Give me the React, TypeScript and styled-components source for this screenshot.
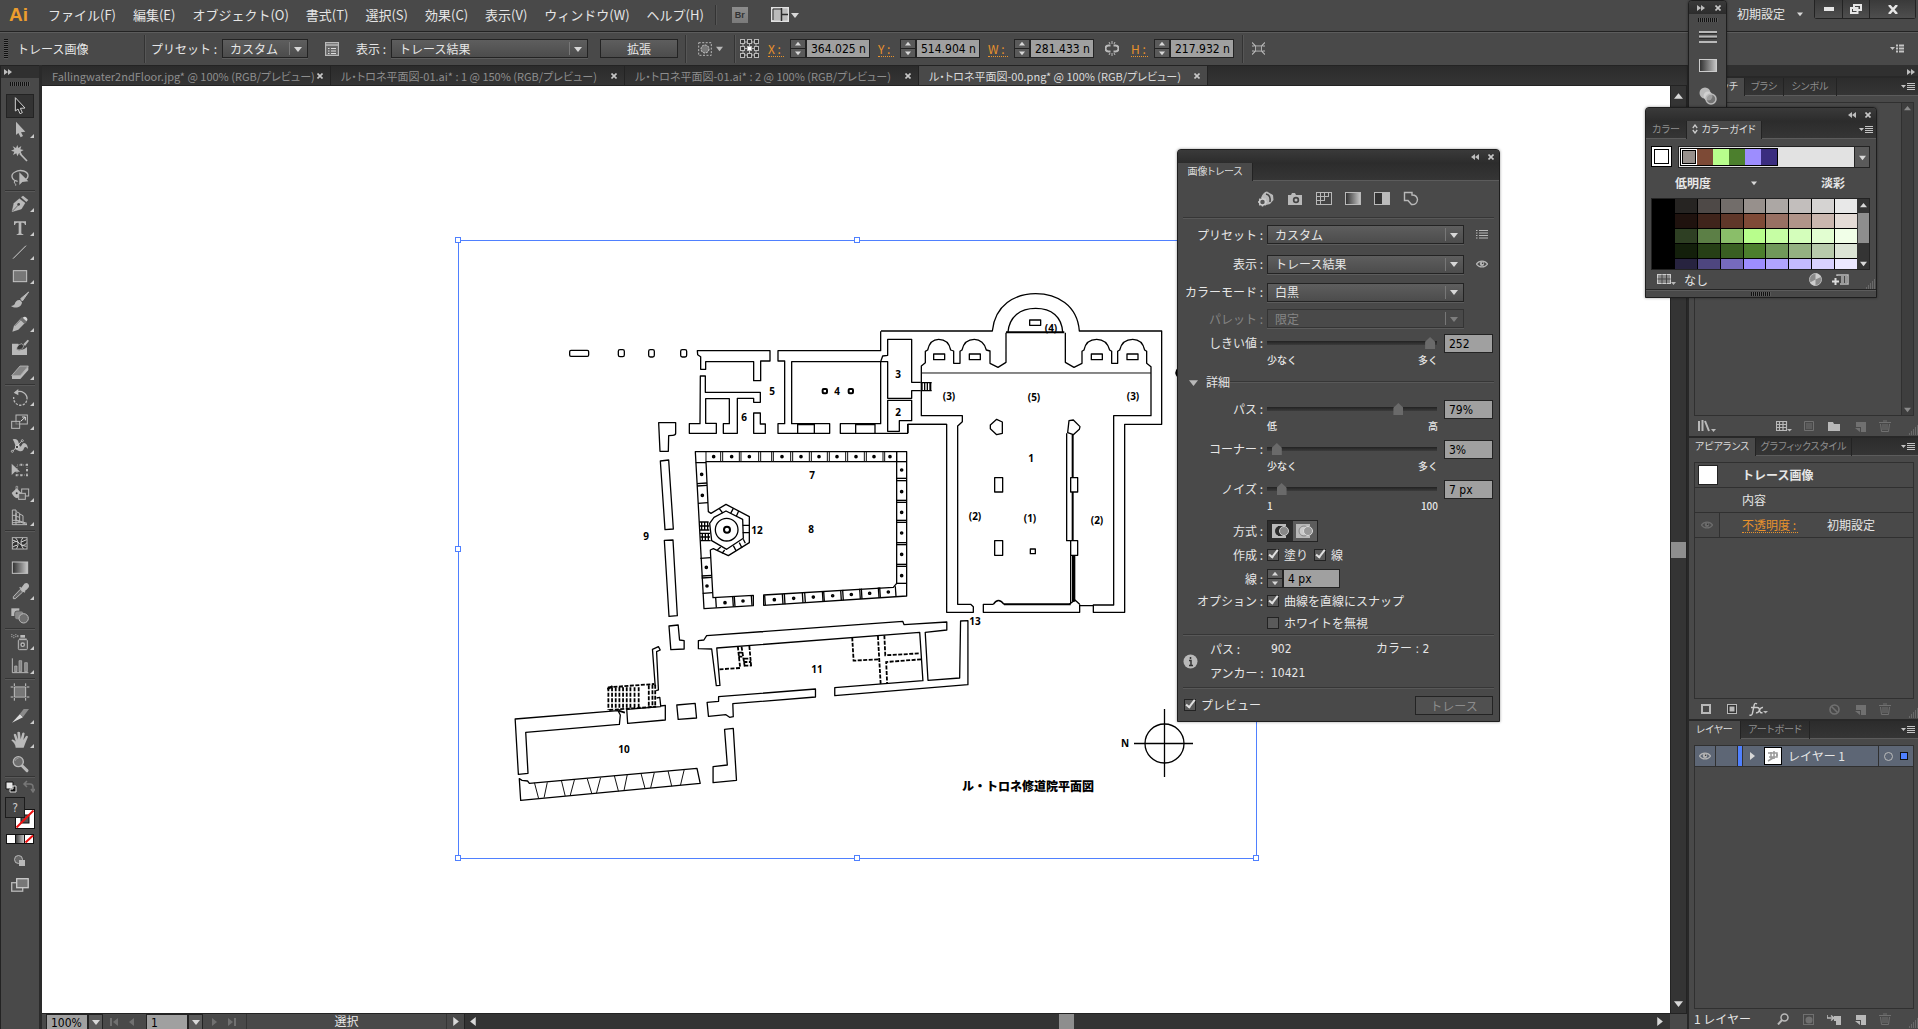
import React from "react";
import styled, { createGlobalStyle, css } from "styled-components";

const ui = '"Noto Sans CJK JP", "Noto Sans", sans-serif';
const num = '"DejaVu Sans Condensed", "Noto Sans", "Noto Sans CJK JP", sans-serif';
const c = {
  panel: "#494949",
  dark: "#303030",
  line: "#232323",
  light: "#5c5c5c",
  text: "#e6e6e6",
  dim: "#8e8e8e",
  field: "#a0a0a0",
  orange: "#e8922c",
  blue: "#4f80ff",
};

const Global = createGlobalStyle`
  *, *::before, *::after { box-sizing: border-box; }
  body { margin: 0; background: ${c.panel}; color: ${c.text}; font: 12px/16px ${ui}; overflow: hidden; }
  button, input, select { font: inherit; color: inherit; margin: 0; padding: 0; border: 0; background: none; border-radius: 0; }
  svg { display: block; flex: none; }
`;

/* ---------- shared parts ---------- */

const Shell = styled.div`
  position: relative;
  display: flex;
  flex-direction: column;
  height: 100vh;
  overflow: hidden;
  background: ${c.panel};
`;

const IconButton = styled.button<{ $w?: number; $dim?: boolean }>`
  display: inline-flex;
  align-items: center;
  justify-content: center;
  flex: none;
  width: ${(p) => (p.$w ? `${p.$w}px` : "auto")};
  opacity: ${(p) => (p.$dim ? 0.35 : 1)};
`;

const Tri = ({ d = "down", s = 8, color = "#d8d8d8" }: { d?: string; s?: number; color?: string }) => {
  const pts: Record<string, string> = {
    down: "0,2 8,2 4,7",
    up: "0,6 8,6 4,1",
    left: "6,0 6,8 1,4",
    right: "2,0 2,8 7,4",
  };
  return (
    <svg width={s} height={s} viewBox="0 0 8 8" aria-hidden>
      <polygon points={pts[d]} fill={color} />
    </svg>
  );
};

const Cross = ({ s = 6, color = "#c8c8c8" }: { s?: number; color?: string }) => (
  <svg width={s} height={s} viewBox="0 0 6 6" aria-hidden>
    <path d="M.5 .5L5.5 5.5M5.500 .5L.5 5.500" stroke={color} strokeWidth="1.6" />
  </svg>
);

const Chevrons = ({ left = false }: { left?: boolean }) => (
  <svg width="8" height="6" viewBox="0 0 8 6" aria-hidden>
    <path d={left ? "M4 0V6L0 3ZM8 0V6L4 3Z" : "M0 0V6L4 3ZM4 0V6L8 3Z"} fill="#bdbdbd" />
  </svg>
);

const FlyoutIcon = () => (
  <svg width="14" height="9" viewBox="0 0 14 9" aria-hidden>
    <path d="M0 3H5L2.500 6Z" fill="#c4c4c4" />
    <path d="M6 1.500H14M6 3.500H14M6 5.500H14M6 7.500H14" stroke="#c4c4c4" />
  </svg>
);

const ListFlyout = () => (
  <svg width="14" height="10" viewBox="0 0 14 10" aria-hidden>
    <path d="M0 3H5L2.500 6Z" fill="#c4c4c4" />
    <path d="M6 1.500H8M6 4.500H8M6 7.500H8M9 1.500H14M9 4.500H14M9 7.500H14" stroke="#c4c4c4" strokeWidth="2" />
  </svg>
);

const Dots = styled.i`
  display: block;
  width: 20px;
  height: 4px;
  background: repeating-linear-gradient(90deg, #111 0 1px, #5a5a5a 1px 2px);
`;

const GripHold = styled.span`
  align-self: flex-end;
  margin-left: 6px;
`;
const Grip = () => (
  <GripHold>
    <svg width="10" height="10" viewBox="0 0 10 10" aria-hidden>
      <path
        d="M9 1h1M7 3h1M9 3h1M5 5h1M7 5h1M9 5h1M3 7h1M5 7h1M7 7h1M9 7h1M1 9h1M3 9h1M5 9h1M7 9h1M9 9h1"
        stroke="#8a8a8a"
      />
    </svg>
  </GripHold>
);

const Eye = ({ color = "#b4b4b4" }: { color?: string }) => (
  <svg width="12" height="8" viewBox="0 0 12 8" aria-hidden>
    <path d="M.5 4C3 .2 9 .2 11.500 4C9 7.800 3 7.800 .5 4Z" fill="none" stroke={color} strokeWidth="1.3" />
    <circle cx="6" cy="3.700" r="2.200" fill={color} />
    <circle cx="6.600" cy="3.200" r=".8" fill="#333" />
  </svg>
);

/* ---------- menu bar ---------- */

const MenuBar = styled.header`
  display: flex;
  align-items: center;
  flex: none;
  height: 32px;
  padding: 0 2px 2px 9px;
  border-bottom: 1px solid ${c.line};
`;
const Logo = styled.span`
  width: 39px;
  color: #eb9d2e;
  font: bold 19px/28px "Liberation Sans", sans-serif;
`;
const Menus = styled.nav`
  display: flex;
  gap: 17px;
  margin-right: 11px;
  white-space: nowrap;
`;
const MenuButton = styled.button`
  font-size: 13px;
  line-height: 28px;
`;
const Rule = styled.i<{ $h?: number }>`
  flex: none;
  width: 2px;
  height: ${(p) => p.$h ?? 28}px;
  border-left: 1px solid #333;
  border-right: 1px solid #565656;
`;
const BridgeTile = styled.button`
  width: 16px;
  height: 16px;
  margin: 0 23px 0 15px;
  background: linear-gradient(#8d8d8d, #7a7a7a);
  color: #333;
  font: bold 9px/16px "Liberation Sans", sans-serif;
`;
const LayoutButton = styled(IconButton)`
  gap: 2px;
`;
const WorkspaceButton = styled.button`
  display: flex;
  align-items: center;
  gap: 12px;
  height: 26px;
  margin: 0 11px 2px auto;
`;
const WindowButtons = styled.div`
  display: flex;
  align-self: flex-start;
  height: 19px;
  border: 1px solid ${c.line};
  border-top: 0;
  border-radius: 0 0 3px 3px;
`;
const WindowButton = styled.button<{ $w: number }>`
  display: flex;
  align-items: center;
  justify-content: center;
  width: ${(p) => p.$w}px;
  height: 18px;
  background: linear-gradient(#3a3a3a, #4e4e4e);
  & + & {
    border-left: 1px solid ${c.line};
  }
`;

/* ---------- control bar ---------- */

const ControlBar = styled.div`
  display: flex;
  align-items: center;
  flex: none;
  height: 33px;
  padding: 0 11px 1px 4px;
  border-top: 1px solid ${c.light};
  white-space: nowrap;
`;
const SideGrip = styled.i`
  width: 4px;
  height: 20px;
  margin-right: 9px;
  background: repeating-linear-gradient(#111 0 1px, #5a5a5a 1px 2px);
`;
const BarTitle = styled.strong<{ $w: number }>`
  width: ${(p) => p.$w}px;
  font-weight: 400;
`;
const BarLabel = styled.label<{ $w: number }>`
  width: ${(p) => p.$w}px;
`;
const SelectBox = styled.span<{ $w?: number; $off?: boolean }>`
  position: relative;
  display: flex;
  flex: none;
  width: ${(p) => (p.$w ? `${p.$w}px` : "100%")};
  height: 19px;
  border: 1px solid ${c.line};
  background: linear-gradient(#5e5e5e, #4c4c4c);
  ${(p) => p.$off && css`background: ${c.panel}; border-color: #343434; color: #858585;`}
  box-shadow: 0 1px 0 ${c.light};
`;
const SelectEl = styled.select`
  appearance: none;
  width: 100%;
  padding: 0 20px 0 7px;
  line-height: 16px;
  outline: none;
  opacity: 1;
`;
const SelectMark = styled.span`
  position: absolute;
  right: 0;
  top: 2px;
  display: flex;
  align-items: center;
  height: 13px;
  padding: 0 5px 0 4px;
  border-left: 1px solid #777;
  pointer-events: none;
`;
const PushButton = styled.button<{ $w: number; $off?: boolean }>`
  width: ${(p) => p.$w}px;
  height: 19px;
  border: 1px solid ${c.line};
  background: ${(p) => (p.$off ? "#505050" : "linear-gradient(#5e5e5e, #4c4c4c)")};
  color: ${(p) => (p.$off ? "#8c8c8c" : c.text)};
  line-height: 15px;
`;
const NumGroup = styled.div`
  display: flex;
  align-items: center;
  margin-right: 8px;
`;
const NumLabel = styled.label<{ $w: number }>`
  width: ${(p) => p.$w}px;
  margin-right: 6px;
  color: ${c.orange};
  border-bottom: 1px dotted ${c.orange};
  line-height: 15px;
`;
const StepperBox = styled.span`
  display: flex;
  flex-direction: column;
  width: 16px;
  height: 19px;
  border: 1px solid ${c.line};
  background: #5a5a5a;
  button {
    display: flex;
    flex: 1;
    align-items: center;
    justify-content: center;
  }
  button + button {
    border-top: 1px solid ${c.line};
  }
`;
const Field = styled.input<{ $w: number }>`
  width: ${(p) => p.$w}px;
  height: 19px;
  padding: 1px 0 0 4px;
  border: 1px solid ${c.line};
  background: ${c.field};
  color: #000;
  font: 12px/17px ${num};
  outline: none;
`;

const Drop = ({ id, value, w, off }: { id: string; value: string; w?: number; off?: boolean }) => (
  <SelectBox $w={w} $off={off}>
    <SelectEl id={id} disabled={off}>
      <option>{value}</option>
    </SelectEl>
    <SelectMark>
      <Tri color={off ? "#7e7e7e" : "#d8d8d8"} />
    </SelectMark>
  </SelectBox>
);

const Stepper = ({ name }: { name: string }) => (
  <StepperBox>
    <button type="button" aria-label={`${name} +`}>
      <Tri d="up" s={6} />
    </button>
    <button type="button" aria-label={`${name} -`}>
      <Tri s={6} />
    </button>
  </StepperBox>
);

const NumField = ({ name, value, w }: { name: string; value: string; w: number }) => (
  <NumGroup>
    <NumLabel htmlFor={`num-${name}`} $w={w}>
      {name} :
    </NumLabel>
    <Stepper name={name} />
    <Field id={`num-${name}`} defaultValue={value} $w={64} />
  </NumGroup>
);

const Spaced = styled.span<{ $l?: number; $r?: number }>`
  display: inline-flex;
  align-items: center;
  gap: 4px;
  flex: none;
  margin: 0 ${(p) => p.$r ?? 0}px 0 ${(p) => p.$l ?? 0}px;
`;

/* ---------- tool dock ---------- */

const Main = styled.main`
  display: flex;
  flex: 1;
  min-height: 0;
`;
const ToolDock = styled.aside`
  display: flex;
  flex-direction: column;
  align-items: center;
  flex: none;
  width: 42px;
  border-right: 3px solid #2a2a2a;
  border-left: 1px solid ${c.line};
`;
const ToolHead = styled.div`
  display: flex;
  align-items: center;
  flex: none;
  width: 38px;
  height: 13px;
  padding-left: 3px;
  background: ${c.dark};
  border-top: 1px solid ${c.line};
`;
const ToolGrip = styled.div`
  flex: none;
  padding: 4px 0 8px;
`;
const ToolButton = styled.button<{ $on?: boolean }>`
  position: relative;
  display: flex;
  align-items: center;
  justify-content: center;
  flex: none;
  width: 28px;
  height: 24px;
  ${(p) => p.$on && css`background: #333; outline: 1px solid ${c.line}; outline-offset: -1px;`}
`;
const Corner = styled.i`
  position: absolute;
  right: 0;
  bottom: 4px;
  border: 2px solid transparent;
  border-right-color: #ccc;
  border-bottom-color: #ccc;
`;
const ToolRule = styled.i`
  flex: none;
  width: 30px;
  height: 2px;
  border-top: 1px solid #343434;
  border-bottom: 1px solid #585858;
`;
const FillStroke = styled.div`
  position: relative;
  flex: none;
  width: 30px;
  height: 32px;
  margin-top: 1px;
`;
const StrokeChip = styled.button`
  position: absolute;
  right: 0;
  bottom: 0;
`;
const FillChip = styled.button`
  position: absolute;
  left: 0;
  top: 0;
  width: 20px;
  height: 21px;
  border: 1px solid #1c1c1c;
  background: #454545;
  font: 12px/18px ${num};
  color: #ccc;
`;

const G = "#b9b9b9";
type Tool = { n: string; art: React.ReactNode; more?: boolean; on?: boolean } | null;
const tools: Tool[] = [
  { n: "選択", on: true, art: <path d="M13 2V42L21 36L27 50L34 47L28 34L42 33Z" fill="#262626" stroke="#d0d0d0" strokeWidth="3" /> },
  { n: "ダイレクト選択", more: true, art: <path d="M15 2V42L22 36L29 49L36 45L30 34L43 32Z" fill={G} /> },
  {
    n: "自動選択",
    art: (
      <>
        <path d="M19 0L22 9L31 3L28 13L38 15L29 20L33 29L24 25L19 34L16 25L6 30L10 20L0 17L10 13L5 4L15 9Z" fill={G} />
        <path d="M27 26L48 48" stroke={G} strokeWidth="5" />
      </>
    ),
  },
  {
    n: "なげなわ",
    art: (
      <>
        <path d="M20 37C0 34-2 16 12 9C28 0 52 6 51 21C50 28 44 32 40 33" fill="none" stroke={G} strokeWidth="4" />
        <path d="M16 34Q8 34 10 42Q17 46 14 50" fill="none" stroke={G} strokeWidth="3" />
        <path d="M25 10V48L34 39L52 37Z" fill={G} />
      </>
    ),
  },
  null,
  {
    n: "ペン",
    more: true,
    art: (
      <>
        <path d="M3 50L9 25L25 11L42 24L31 42Z" fill={G} stroke="#ddd" strokeWidth="1" />
        <path d="M30 7L36 2L52 15L46 21Z" fill={G} />
        <path d="M4 49L22 30" stroke="#444" strokeWidth="2" />
        <circle cx="23" cy="28" r="4" fill="#444" />
      </>
    ),
  },
  {
    n: "文字",
    more: true,
    art: <path d="M9 7H45V18H42Q41 11 35 11H31V42Q31 46 37 46V48H17V46Q23 46 23 42V11H19Q13 11 12 18H9Z" fill={G} />,
  },
  { n: "直線", more: true, art: <path d="M6 47L45 8" stroke="#cfcfcf" strokeWidth="3" /> },
  { n: "長方形", more: true, art: <rect x="7" y="11" width="40" height="33" fill="#777" stroke="#c6c6c6" strokeWidth="3" /> },
  {
    n: "ブラシ",
    art: (
      <>
        <path d="M53 3L29 23L34 30Z" fill={G} stroke={G} strokeWidth="3" />
        <path d="M27 27C18 26 13 31 11 40Q7 45 0 45C12 54 32 50 33 34Z" fill={G} />
      </>
    ),
  },
  {
    n: "鉛筆",
    more: true,
    art: (
      <>
        <path d="M4 50L9 32L28 12L41 25L22 44Z" fill={G} />
        <path d="M26 13L33 6L48 20L41 27Z" fill="#707070" />
        <path d="M35 8Q42 2 47 8Q52 14 46 19Z" fill="#d8d8d8" />
        <path d="M11 33L29 15" stroke="#555" strokeWidth="2" />
      </>
    ),
  },
  {
    n: "塗りブラシ",
    art: (
      <>
        <path d="M4 15H28Q10 22 4 36Z" fill="#8a8a8a" />
        <path d="M3 14H22V22Q14 26 20 33Q35 37 48 24V48H3Z" fill={G} />
        <path d="M17 32Q17 17 33 14L38 21Q36 34 17 32Z" fill="#3a3a3a" stroke={G} strokeWidth="2" />
        <path d="M37 16L50 2L54 5L42 21Z" fill={G} />
      </>
    ),
  },
  {
    n: "消しゴム",
    more: true,
    art: (
      <>
        <path d="M2 38L27 9H52L28 38Z" fill="#858585" stroke="#ccc" strokeWidth="2" />
        <path d="M28 38L52 10V21L28 48H3V39Z" fill={G} />
      </>
    ),
  },
  null,
  {
    n: "回転",
    more: true,
    art: (
      <>
        <path d="M13 11C32 0 50 16 48 31" fill="none" stroke={G} strokeWidth="4" />
        <path d="M47 35C41 57 6 52 8 24" fill="none" stroke={G} strokeWidth="4" strokeDasharray="7 4" />
        <path d="M8 11L22 0V19Z" fill={G} />
      </>
    ),
  },
  {
    n: "拡大・縮小",
    more: true,
    art: (
      <>
        <rect x="15" y="6" width="34" height="27" fill="none" stroke={G} strokeWidth="3" />
        <rect x="2" y="25" width="24" height="21" fill="#555" fillOpacity=".6" stroke={G} strokeWidth="3" />
        <path d="M29 25L42 13M33 12H43V22" fill="none" stroke="#ddd" strokeWidth="3" />
      </>
    ),
  },
  {
    n: "線幅",
    more: true,
    art: (
      <>
        <path d="M5 7Q20 3 23 17Q27 34 31 26Q35 16 42 19Q50 23 51 36Q43 25 39 34Q36 46 24 42L13 37Q16 25 5 7Z" fill={G} />
        <path d="M4 44L34 10" stroke="#eee" strokeWidth="2" />
        <circle cx="18" cy="30" r="5" fill="#444" stroke="#eee" strokeWidth="2" />
        <circle cx="4" cy="43" r="3" fill="#444" stroke="#ddd" strokeWidth="2" />
        <circle cx="34" cy="11" r="3" fill="#444" stroke="#ddd" strokeWidth="2" />
      </>
    ),
  },
  {
    n: "自由変形",
    art: (
      <>
        <rect x="18" y="12" width="30" height="30" fill="none" stroke={G} strokeWidth="2" strokeDasharray="3 3" />
        <path d="M2 8V42L12 32H27Z" fill={G} />
        <path d="M28 8h6v6h-6zM45 8h6v6h-6zM45 24h6v6h-6zM45 40h6v6h-6zM28 40h6v6h-6zM14 40h6v6h-6z" fill={G} />
      </>
    ),
  },
  {
    n: "シェイプ形成",
    more: true,
    art: (
      <>
        <path d="M2 24L17 10L33 26L19 40Q9 38 2 24Z" fill={G} />
        <path d="M15 22V4H20V23" fill="none" stroke={G} strokeWidth="2" />
        <circle cx="17" cy="25" r="3" fill="#333" />
        <rect x="32" y="12" width="21" height="21" fill="none" stroke={G} strokeWidth="3" />
        <rect x="23" y="25" width="20" height="18" fill="#5a5a5a" stroke={G} strokeWidth="3" />
      </>
    ),
  },
  {
    n: "遠近グリッド",
    more: true,
    art: (
      <path d="M4 3V48M4 3H15V34L48 47H4M4 19H15M4 34H15M16 8L26 13V38M16 22L26 25M26 15L36 20V42M16 33L48 43M4 41H28M15 12V47" fill="none" stroke={G} strokeWidth="3" />
    ),
  },
  null,
  {
    n: "メッシュ",
    art: (
      <>
        <rect x="4" y="8" width="44" height="34" fill="#333" stroke={G} strokeWidth="3" />
        <path d="M5 25Q16 13 26 26Q36 37 47 24M14 9Q27 22 17 41M35 9Q24 23 37 41M5 15L20 21M47 14L31 21M6 36Q12 31 18 31M46 34L33 31" fill="none" stroke="#d0d0d0" strokeWidth="3" />
      </>
    ),
  },
  { n: "グラデーション", art: <rect x="4" y="9" width="46" height="34" fill="url(#ramp)" stroke="#c4c4c4" strokeWidth="3" /> },
  {
    n: "スポイト",
    more: true,
    art: (
      <>
        <path d="M7 47V41L28 19L35 27L13 47Z" fill="#666" stroke={G} strokeWidth="3" />
        <path d="M26 13L42 28M31 18L42 3Q49 0 52 7Q54 12 47 17L37 25Z" fill={G} stroke={G} strokeWidth="4" />
      </>
    ),
  },
  {
    n: "ブレンド",
    art: (
      <>
        <rect x="1" y="4" width="24" height="23" fill={G} />
        <rect x="11" y="12" width="27" height="26" rx="7" fill="#888" stroke="#444" strokeWidth="2" />
        <circle cx="38" cy="34" r="14" fill="#6f6f6f" stroke={G} strokeWidth="3" />
      </>
    ),
  },
  null,
  {
    n: "シンボルスプレー",
    more: true,
    art: (
      <>
        <rect x="22" y="20" width="27" height="30" rx="3" fill="#555" stroke={G} strokeWidth="3" />
        <rect x="28" y="6" width="14" height="8" fill={G} />
        <path d="M24 18H47" stroke={G} strokeWidth="3" />
        <circle cx="35" cy="35" r="7" fill={G} />
        <circle cx="35" cy="35" r="3" fill="#333" />
        <path d="M1 5h3m3 3h3m3-3h3m3 3h3M1 11h3m3 3h3m3-3h3m3 0h3" stroke={G} strokeWidth="3" />
      </>
    ),
  },
  {
    n: "棒グラフ",
    more: true,
    art: (
      <>
        <path d="M4 4V47H52" fill="none" stroke={G} strokeWidth="3" />
        <path d="M11 27h7v17h-7zM24 11h8v33h-8zM41 17h8v27h-8z" fill="#888" stroke={G} strokeWidth="2" />
      </>
    ),
  },
  null,
  {
    n: "アートボード",
    art: (
      <>
        <rect x="12" y="14" width="30" height="26" fill="#777" />
        <path d="M10 1V9M10 12V42M10 45V53M44 1V9M44 12V42M44 45V53M-1 12H7M10 12H44M47 12H55M-1 42H7M10 42H44M47 42H55" stroke="#c6c6c6" strokeWidth="3" />
      </>
    ),
  },
  {
    n: "スライス",
    more: true,
    art: (
      <>
        <path d="M3 47L27 21L36 31Q18 40 3 47Z" fill="#ddd" />
        <path d="M27 20L38 6H54L36 30Z" fill="#8a8a8a" />
      </>
    ),
  },
  {
    n: "手のひら",
    more: true,
    art: (
      <path
        d="M14 50Q13 38 1 28Q4 22 13 30L15 34L8 11Q11 6 15 10L21 26L19 4Q23 0 27 4L29 25L34 6Q38 2 41 7L37 27L45 15Q49 13 51 17L42 39L38 50Z"
        fill={G}
      />
    ),
  },
  {
    n: "ズーム",
    art: (
      <>
        <path d="M31 30L48 47" stroke={G} strokeWidth="9" strokeLinecap="round" />
        <circle cx="22" cy="20" r="15" fill="#6e6e6e" stroke={G} strokeWidth="4" />
        <path d="M12 18Q14 10 23 9" stroke="#999" strokeWidth="3" fill="none" />
      </>
    ),
  },
  null,
];

/* ---------- document area ---------- */

const Center = styled.section`
  display: flex;
  flex: 1;
  flex-direction: column;
  min-width: 0;
`;
const DocTabs = styled.div`
  display: flex;
  flex: none;
  height: 21px;
  background: linear-gradient(#2b2b2b, #353535);
  border-top: 1px solid ${c.line};
  border-bottom: 1px solid ${c.line};
`;
const DocTab = styled.button<{ $on?: boolean }>`
  display: flex;
  align-items: center;
  justify-content: space-between;
  width: 294px;
  padding: 0 7px 0 10px;
  border-right: 1px solid ${c.line};
  background: ${(p) => (p.$on ? c.panel : "transparent")};
  color: ${(p) => (p.$on ? "#dcdcdc" : c.dim)};
  font-size: 11px;
  line-height: 18px;
  font-feature-settings: "palt";
  white-space: nowrap;
  &:first-child,
  &:last-child {
    width: 289px;
  }
`;
const CanvasRow = styled.div`
  display: flex;
  flex: 1;
  min-height: 0;
`;
const Canvas = styled.div`
  flex: 1;
  min-width: 0;
  overflow: hidden;
  background: #fff;
`;
const VScroll = styled.div`
  display: flex;
  flex-direction: column;
  align-items: center;
  justify-content: space-between;
  flex: none;
  width: 17px;
  padding: 6px 0 5px;
  background: #343434;
  border-left: 1px solid ${c.line};
  border-right: 1px solid ${c.line};
`;
const Thumb = styled.i`
  width: 15px;
  height: 16px;
  background: #8e8e8e;
`;
const Status = styled.footer`
  display: flex;
  flex: none;
  height: 16px;
  border-top: 1px solid ${c.line};
  padding-left: 4px;
`;
const StatusBox = styled.span`
  display: flex;
  flex: none;
  width: 57px;
  height: 15px;
`;
const StatusField = styled(Field)`
  height: 15px;
  border-bottom: 0;
  line-height: 14px;
`;
const StatusDrop = styled.button`
  width: 15px;
  display: flex;
  align-items: center;
  justify-content: center;
  border: 1px solid ${c.line};
  border-bottom: 0;
  background: #5a5a5a;
`;
const PageNav = styled.span`
  display: flex;
  align-items: center;
  justify-content: space-between;
  width: 43px;
  height: 15px;
  padding: 0 10px 0 7px;
`;
const StatusText = styled.span`
  width: 201px;
  height: 15px;
  text-align: center;
  border-left: 1px solid #363636;
  border-right: 1px solid #363636;
  font-size: 12px;
  line-height: 14px;
`;
const HScroll = styled.div`
  display: flex;
  flex: 1;
  align-items: center;
  justify-content: space-between;
  margin-right: 17px;
  padding: 0 6px 0 4px;
  background: #343434;
  border-left: 1px solid ${c.line};
`;
const StatusMore = styled(IconButton)`
  width: 17px;
`;

/* ---------- floor plan ---------- */

const PlanSvg = styled.svg`
  width: 1628px;
  height: 927px;
  .ln { fill: none; stroke: #000; stroke-width: 1.3; vector-effect: non-scaling-stroke; stroke-linejoin: round; }
  .thin { fill: none; stroke: #111; stroke-width: 1; vector-effect: non-scaling-stroke; }
  .thick { fill: none; stroke: #000; stroke-width: 2; vector-effect: non-scaling-stroke; }
  .dash { fill: none; stroke: #000; stroke-width: 1.8; stroke-dasharray: 4 1.5; vector-effect: non-scaling-stroke; }
  text { font: bold 10px "Noto Sans", sans-serif; fill: #000; text-anchor: middle; }
  .title { font: 900 12px "Noto Sans CJK JP", sans-serif; }
  .sel { fill: none; stroke: ${c.blue}; }
  .handle { fill: #fff; stroke: ${c.blue}; }
`;

const topDots = [791, 845, 898, 996, 1053, 1107, 1161, 1218, 1272, 1320];
const topWalls = [768, 812, 818, 868, 873, 926, 932, 965, 970, 1022, 1028, 1078, 1084, 1132, 1138, 1187, 1193, 1243, 1249, 1299, 1304, 1340];
const sideWalls = [425, 475, 482, 541, 547, 601, 607, 668, 674, 733, 739, 790];
const sideDots = [450, 515, 577, 639, 703, 767];
const lowWalls = [997, 1003, 1057, 1064, 1117, 1121, 1172, 1178, 1229, 1234, 1285, 1289, 1336];
const lowDots = [973, 1031, 1090, 1148, 1204, 1259, 1315];
const labels: [string, number, number][] = [
  ["5", 772, 391], ["4", 837, 391], ["6", 744, 417], ["7", 812, 475], ["8", 811, 529], ["9", 646, 536], ["12", 757, 530],
  ["3", 898, 374], ["2", 898, 412], ["(3)", 949, 396], ["(5)", 1034, 397], ["(3)", 1133, 396], ["(4)", 1051, 328],
  ["1", 1031, 458], ["(2)", 975, 516], ["(1)", 1030, 518], ["(2)", 1097, 520], ["13", 975, 621],
  ["11", 817, 669], ["10", 624, 749], ["N", 1125, 743],
];
const handles: [number, number][] = [[458, 240], [857, 240], [458, 549], [458, 858], [857, 858], [1256, 858]];

const Plan = () => (
  <PlanSvg viewBox="42 86 1628 927" role="img" aria-label="ル・トロネ修道院平面図">
    <g transform="translate(450 320) scale(.33333)">
      <rect className="ln" x="359" y="91" width="57" height="18" rx="4" />
      <rect className="ln" x="505" y="89" width="18" height="21" rx="5" />
      <rect className="ln" x="596" y="89" width="17" height="22" rx="5" />
      <rect className="ln" x="692" y="89" width="18" height="22" rx="5" />
      <path className="ln" d="M742 92H960V123H932V182H911V125H767V148H752V110L743 104Z" />
      <path className="ln" d="M751 168H766V217H931V247H911V235H862V340H820V311H838V236H767V310H799V340H718V311H750Z" />
      <path className="ln" d="M911 279H931V312H946V340H911Z" />
      <path className="ln" d="M1292 34V92H984V123H1004V311H984V340H1139V311H1025V125H1292V311H1171V340H1373V313H1490M1292 125L1298 108L1313 106V58H1385V187H1412M1292 125H1313V235H1385V212H1412" />
      <path className="ln" d="M1313 241H1385V302H1348V334H1313ZM1043 311V340M1093 311V340M1217 311V340M1275 311V340" />
      <path className="thick" d="M1043 313H1093M1217 313H1275" />
      <rect className="thick" x="1118" y="207" width="13" height="13" rx="3" />
      <rect className="thick" x="1196" y="207" width="13" height="13" rx="3" />
      <path className="ln" d="M626 308H677V340Q677 346 668 346L656 347L655 394H630Z" />
      <path className="ln" d="M631 423L656 420L670 627L645 629ZM643 661L669 660L682 887L657 889Z" />
      <path className="ln" d="M736 395H1370V828L941 856V825L1330 802L1340 790V425H768L775 575L783 580L828 553L898 590V668L835 707L790 686L781 690L789 833L910 826V857L762 866Z" />
      <path className="ln" d="M792 592L828 573L878 598L880 655L830 688L785 662L779 610Z" />
      <path className="ln" d="M808 566L818 579M850 565L842 580M866 573L859 589M878 616H898M878 638H898M880 658L886 670M868 668L876 684M850 677L858 692M824 690L816 700M812 681L802 690" />
      <circle className="ln" cx="830" cy="629" r="34" />
      <circle className="thick" cx="831" cy="629" r="9" />
      <path className="ln" d="M748 606H776M749 618H778M750 630H778M750 640H780M751 651H780M752 662H782M755 604V632M764 604V632M773 604V632M757 638V663M766 638V663M775 638V663" />
      {topWalls.map((x) => <path key={x} className="thin" d={`M${x} 396V425`} />)}
      {topDots.map((x) => <circle key={x} className="thick" cx={x} cy="410" r="2.500" />)}
      {sideWalls.map((y) => <path key={y} className="ln" d={`M1340 ${y}H1370`} />)}
      {sideDots.map((y) => <circle key={y} className="thick" cx="1355" cy={y} r="2.500" />)}
      {lowWalls.map((x) => <path key={x} className="ln" d={`M${x} ${822 - (x - 997) * 0.068}l2 31`} />)}
      {lowDots.map((x) => <circle key={x} className="thick" cx={x} cy={839 - (x - 973) * 0.067} r="2.500" />)}
      <path className="ln" d="M737 428H768M741 491L771 489M741 498L771 496M744 550L774 548M751 715L782 713M755 768L786 766M755 774L786 772M758 820L788 818M797 833L799 863M848 830L850 860M853 830L855 860M904 827L906 857M944 826L946 855M1340 425V396" />
      {[[755, 463], [757, 526], [769, 742], [771, 798], [825, 848], [879, 843]].map(([x, y]) => (
        <circle key={y} className="thick" cx={x} cy={y} r="2.500" />
      ))}
    </g>
    <g transform="translate(880 270) scale(.33333)">
      <path className="ln" d="M3 183H337C345 105 405 71 467 71C530 71 592 105 598 183H845V463H734V1027H640V1005H701V437H813V290L800 280V244L794 240C790 222 778 208 758 208C738 208 724 220 719 240L713 244V280H695V244L689 240C684 222 672 208 650 208C630 208 616 220 612 240L606 244V280L582 292L556 277V188" />
      <path className="ln" d="M378 188V277L354 292L330 280V243L319 240C315 220 300 208 283 208C262 208 250 222 246 240L240 244V280H221V243L212 240C208 220 195 208 176 208C157 208 147 222 143 240L136 244V278L124 288V437H247V455L233 468V1003H272L280 1010V1027H200V463H84V489" />
      <path className="ln" d="M384 186C388 140 420 115 467 115C515 115 545 140 548 186" />
      <path className="thick" d="M378 187H553" />
      <path className="thin" d="M124 309H813" />
      <path className="ln" d="M161 252H194V269H161ZM268 252H301V269H268ZM634 252H667V269H634ZM741 252H774V269H741Z" />
      <path className="ln" d="M449 150H482V166H449Z" />
      <path className="ln" d="M122 338H155M122 362H155M126 338V362M134 338V362M142 338V362" />
      <path className="thick" d="M151 338V362" />
      <path className="ln" d="M350 448L367 456V490L350 494L331 476V465ZM567 452L580 450L600 470L598 478L580 494L563 488Z" />
      <path className="ln" d="M344 623H368V666H344ZM572 623H593V666H572ZM344 812H368V856H344ZM572 812H593V856H572ZM451 837H466V851H451Z" />
      <path className="ln" d="M560 490V812H572M572 856V1000" />
      <path className="thick" d="M578 494V623M578 666V812M372 1003H572" />
      <path className="ln" d="M340 1003Q355 980 372 1003M568 1003L585 990L599 1003" />
      <path d="M581 856V995" stroke="#000" strokeWidth="10" />
      <path className="ln" d="M340 1003H310V1027H599V1003M600 1007H640" />
      <path className="thick" d="M894 297Q884 308 894 320" />
    </g>
    <g transform="translate(500 600) scale(.4592 .33333)">
      <path className="ln" d="M368 78L388 75L391 120L401 122V147L372 149Z" />
      <path className="ln" d="M432 122L444 120L450 107L877 64L880 74L973 66V90L926 97L932 241L1001 234L1003 63L1019 62V254L729 287V263L921 242L914 97L472 144L479 256L471 257L461 147L432 146Z" />
      <path className="ln" d="M687 267L476 290V304L451 307L454 349L492 344L500 352L508 350L507 311L687 291Z" />
      <path className="ln" d="M385 315L425 310L428 354L388 358Z" />
      <path className="ln" d="M338 258L332 148L345 140L349 150L341 155L345 270L340 272M341 294L348 292L350 318L360 316V360L278 370L276 328L350 320" />
      <path className="ln" d="M33 357L257 332L262 345L260 373L56 397L61 520L40 523Z" />
      <path className="ln" d="M42 536L48 541L60 543L64 550L429 505L436 550L45 601Z" />
      <path className="thin" d="M75 548L84 595M103 547L96 593M134 543L142 588M162 540L153 586M190 536L200 581M219 533L210 580M249 527L258 574M277 525L270 572M307 520L316 566M336 518L328 564M366 513L374 559M401 510L393 556" />
      <path className="ln" d="M489 388L508 385L515 541L464 548V500L495 495Z" />
      <path className="dash" d="M478 208L523 204L518 140M526 140L533 200M532 176H547M530 186H547M532 197H547M519 158H531M519 170H531M543 138L547 200M767 112L770 182L825 178M823 108L829 252M837 106L839 166L915 160M917 178L841 186L843 250" />
      <path className="dash" d="M235 262L336 252M238 330L340 320M236 262V330M244 262V330M252 262V330M260 262V330M268 262V328M276 262V328M284 262V328M293 262V326M302 262V326M324 256V322M332 254V322M338 254V322" />
      <path className="thick" d="M234 268L245 258M258 332L272 338" />
    </g>
    <circle className="ln" cx="1164.500" cy="743.500" r="19.500" />
    <path className="ln" d="M1134 743.500H1193M1164.500 709V777" />
    {labels.map(([t, x, y]) => (
      <text key={`${t}-${x}`} x={x} y={y + 4}>{t}</text>
    ))}
    <text className="title" x="1028" y="791">ル・トロネ修道院平面図</text>
    <rect className="sel" x="458.500" y="240.500" width="798" height="618" />
    {handles.map(([x, y]) => (
      <rect key={`${x}-${y}`} className="handle" x={x - 2.5} y={y - 2.5} width="5" height="5" />
    ))}
  </PlanSvg>
);

/* ---------- docked panels ---------- */

const RightDock = styled.aside`
  display: flex;
  flex-direction: column;
  flex: none;
  width: 231px;
  gap: 2px;
  background: #282828;
  padding-left: 2px;
`;
const DockHead = styled.div`
  display: flex;
  align-items: center;
  justify-content: flex-end;
  flex: none;
  height: 11px;
  padding: 2px 3px 0 0;
  background: ${c.dark};
`;
const Panel = styled.section<{ $h?: number }>`
  display: flex;
  flex-direction: column;
  background: ${c.panel};
  ${(p) => (p.$h ? `flex: none; height: ${p.$h}px;` : "flex: 1; min-height: 0;")}
`;
const TabRow = styled.div`
  display: flex;
  flex: none;
  align-items: stretch;
  height: 18px;
  background: linear-gradient(#2c2c2c, #353535);
  border-bottom: 1px solid ${c.light};
`;
const PanelTab = styled.button<{ $on?: boolean; $w: number }>`
  display: flex;
  align-items: center;
  justify-content: center;
  gap: 3px;
  width: ${(p) => p.$w}px;
  height: 18px;
  padding-bottom: 2px;
  border-right: 1px solid ${c.line};
  background: ${(p) => (p.$on ? c.panel : "transparent")};
  color: ${(p) => (p.$on ? "#dcdcdc" : c.dim)};
  font-size: 10px;
  line-height: 16px;
  font-feature-settings: "palt";
  white-space: nowrap;
`;
const TabMenu = styled.button`
  margin-left: auto;
  padding: 0 3px;
`;
const Well = styled.div`
  display: flex;
  flex: 1;
  flex-direction: column;
  min-height: 0;
  margin: 6px 4px 0 5px;
  border: 1px solid #303030;
`;
const WellScroll = styled.div`
  display: flex;
  flex-direction: column;
  justify-content: space-between;
  align-items: center;
  flex: 1;
  align-self: flex-end;
  width: 12px;
  padding: 2px 0;
  background: #3e3e3e;
  border-left: 1px solid #303030;
`;
const PanelFoot = styled.div`
  display: flex;
  align-items: center;
  flex: none;
  height: 20px;
  padding: 0 0 0 9px;
`;
const LayerFoot = styled(PanelFoot)`
  padding-left: 5px;
`;
const Push = styled.span`
  margin-left: auto;
  display: flex;
  align-items: center;
  gap: 10px;
  height: 18px;
`;
const AttrRow = styled.div`
  display: flex;
  align-items: center;
  flex: none;
  height: 25px;
  padding-bottom: 1px;
  border-bottom: 1px solid #303030;
`;
const AttrLead = styled.span<{ $line?: boolean }>`
  display: flex;
  align-items: center;
  justify-content: center;
  width: 25px;
  height: 24px;
  margin-right: 22px;
  border-right: ${(p) => (p.$line ? "1px solid #303030" : "0")};
`;
const WhiteChip = styled.i`
  width: 20px;
  height: 20px;
  border: 1px solid ${c.line};
  background: #fff;
`;
const AttrLink = styled.a`
  width: 56px;
  margin-right: 29px;
  color: ${c.orange};
  text-decoration: none;
  border-bottom: 1px dotted ${c.orange};
  line-height: 15px;
  white-space: nowrap;
`;
const LayerRow = styled.div`
  display: flex;
  align-items: center;
  flex: none;
  height: 21px;
  background: #5d6675;
  border-bottom: 1px solid #303030;
`;
const LayerCell = styled.span<{ $w: number }>`
  display: flex;
  align-items: center;
  justify-content: center;
  gap: 7px;
  width: ${(p) => p.$w}px;
  height: 20px;
  border-right: 1px solid #303030;
`;
const LayerEnd = styled(LayerCell)`
  border-left: 1px solid #303030;
  border-right: 0;
`;
const LayerColor = styled.i`
  width: 5px;
  height: 20px;
  margin-right: 5px;
  background: ${c.blue};
  border-right: 1px solid #303030;
`;
const LayerThumb = styled.span`
  width: 18px;
  height: 18px;
  margin: 0 6px 0 8px;
  border: 1px solid #000;
  background: #fff;
`;
const LayerName = styled.span`
  flex: 1;
`;
const Target = styled.i`
  width: 9px;
  height: 9px;
  border: 1px solid #bbb;
  border-radius: 50%;
`;
const SelSquare = styled.i`
  width: 8px;
  height: 8px;
  border: 1px solid #111;
  background: ${c.blue};
`;

const Trash = () => (
  <svg width="12" height="12" viewBox="0 0 12 12" aria-hidden>
    <path d="M0 2.500H12M4 1H8M1.500 4L2.500 11.500H9.500L10.500 4M4 4V10M6 4V10M8 4V10" fill="none" stroke={G} />
  </svg>
);
const NewPage = () => (
  <svg width="11" height="11" viewBox="0 0 11 11" aria-hidden>
    <path d="M1 1H11V11H6V6H1Z" fill={G} />
    <path d="M0 7H5V11Z" fill={G} />
  </svg>
);
const FolderIcon = () => (
  <svg width="12" height="10" viewBox="0 0 12 10" aria-hidden>
    <path d="M0 10V1H5L6 3H12V10Z" fill={G} />
  </svg>
);
const GridIcon = () => (
  <svg width="16" height="11" viewBox="0 0 16 11" aria-hidden>
    <path d="M.5 .5H10.500V9.500H.5ZM.5 3.500H10.500M.5 6.500H10.500M3.500 .5V9.500M7 .5V9.500" fill="none" stroke={G} strokeWidth="1.200" />
    <path d="M11 8H16L13.500 10.500Z" fill={G} />
  </svg>
);

/* ---------- floating windows ---------- */

const FloatShell = styled.section`
  position: absolute;
  display: flex;
  flex-direction: column;
  background: ${c.panel};
  border: 1px solid #1e1e1e;
  border-radius: 4px 4px 0 0;
  box-shadow: 0 0 3px rgba(0, 0, 0, 0.4);
`;
const MiniDock = styled(FloatShell)`
  right: 191px;
  top: 0;
  width: 39px;
  height: 111px;
  align-items: center;
`;
const MiniIcons = styled.div`
  display: flex;
  flex-direction: column;
  align-items: center;
  gap: 15px;
  padding-top: 9px;
`;
const GuideWindow = styled(FloatShell)`
  right: 41px;
  top: 107px;
  width: 232px;
`;
const TraceWindow = styled(FloatShell)`
  right: 418px;
  top: 149px;
  width: 323px;
`;
const FloatHead = styled.div<{ $gap?: number }>`
  display: flex;
  align-items: center;
  justify-content: flex-end;
  flex: none;
  align-self: stretch;
  gap: ${(p) => p.$gap ?? 9}px;
  height: 13px;
  padding-right: 5px;
  border-radius: 3px 3px 0 0;
  background: linear-gradient(#3a3a3a, #2c2c2c);
`;
const MiniGrip = styled.div`
  padding-top: 4px;
`;

const GuideTop = styled.div`
  display: flex;
  padding: 7px 6px 0 5px;
`;
const BaseChip = styled.button`
  width: 21px;
  height: 21px;
  margin-right: 6px;
  border: 1px solid #000;
  background: #fff;
  box-shadow: inset 0 0 0 2px #fff, inset 0 0 0 3px #000;
`;
const Harmony = styled.div`
  display: flex;
  flex: 1;
  height: 22px;
  padding: 1px;
  border: 1px solid ${c.line};
  background: #e2e2e2;
`;
const HarmonyStrip = styled.div`
  display: flex;
  border: 1px solid #000;
`;
const HarmonyColor = styled.button<{ $c: string; $on?: boolean }>`
  width: 16px;
  height: 16px;
  background: ${(p) => p.$c};
  ${(p) => p.$on && css`border: 1px solid #fff; box-shadow: inset 0 0 0 1px #000;`}
`;
const HarmonyDrop = styled.button`
  display: flex;
  align-items: center;
  justify-content: center;
  width: 15px;
  height: 22px;
  border: 1px solid ${c.line};
  border-left: 0;
  background: #5a5a5a;
`;
const GuideLabels = styled.div`
  display: grid;
  grid-template-columns: 76px 1fr auto;
  align-items: center;
  height: 30px;
  padding: 0 31px 0 29px;
  font-weight: 700;
`;
const GuideGridRow = styled.div`
  display: flex;
  height: 72px;
  margin: 0 6px 0 5px;
  border: 1px solid ${c.line};
`;
const GuideGrid = styled.div`
  display: grid;
  flex: 1;
  grid-template-columns: repeat(9, 1fr);
  grid-auto-rows: 14px;
  gap: 1px;
  overflow: hidden;
  background: #000;
`;
const Swatch = styled.button<{ $c: string }>`
  background: ${(p) => p.$c};
`;
const GuideScroll = styled.div`
  display: flex;
  flex-direction: column;
  align-items: center;
  justify-content: space-between;
  width: 12px;
  padding: 3px 0 2px;
  background: #343434;
`;
const GuideThumb = styled.i`
  width: 11px;
  height: 30px;
  margin-bottom: 13px;
  background: #8e8e8e;
`;
const GuideFoot = styled.div`
  display: flex;
  align-items: center;
  gap: 8px;
  height: 20px;
  padding: 0 1px 0 11px;
  border-bottom: 1px solid ${c.line};
`;
const GuideGrip = styled.div`
  display: flex;
  align-items: center;
  justify-content: center;
  height: 7px;
  border-top: 1px solid ${c.light};
`;

const TraceBody = styled.form`
  display: flex;
  flex-direction: column;
  padding: 0 5px;
`;
const PresetIcons = styled.div`
  display: flex;
  align-items: center;
  justify-content: center;
  gap: 13px;
  height: 36px;
`;
const HRule = styled.i`
  height: 2px;
  border-top: 1px solid #363636;
  border-bottom: 1px solid #585858;
`;
const Row = styled.div<{ $h: number }>`
  display: grid;
  grid-template-columns: 80px 197px 1fr;
  align-items: center;
  column-gap: 4px;
  height: ${(p) => p.$h}px;
`;
const SliderLine = styled(Row)`
  grid-template-columns: 80px 170px 50px;
  & > input:last-child {
    margin-left: 3px;
  }
`;
const labelText = css`
  text-align: right;
  white-space: nowrap;
`;
const RowLabel = styled.label<{ $off?: boolean }>`
  ${labelText}
  color: ${(p) => (p.$off ? "#858585" : c.text)};
`;
const RowText = styled.span`
  ${labelText}
`;
const Aside = styled.span`
  padding-left: 8px;
`;
const Range = styled.input`
  appearance: none;
  width: 170px;
  height: 14px;
  background: linear-gradient(#222, #3c3c3c) center / 100% 4px no-repeat;
  &::-webkit-slider-thumb {
    appearance: none;
    width: 10px;
    height: 12px;
    background: #6a6a6a;
    clip-path: polygon(50% 0, 100% 40%, 100% 100%, 0 100%, 0 40%);
  }
`;
const Captions = styled.div`
  display: flex;
  justify-content: space-between;
  height: 16px;
  padding: 0 56px 0 84px;
  font-size: 10px;
  font-weight: 500;
  line-height: 10px;
`;
const Details = styled.button`
  display: flex;
  align-items: center;
  gap: 8px;
  height: 26px;
  padding: 0 0 4px 6px;
  i {
    flex: 1;
    margin-left: -8px;
  }
`;
const Segments = styled.div`
  display: flex;
  width: 51px;
  height: 22px;
  border: 1px solid ${c.line};
`;
const Segment = styled.button<{ $on?: boolean }>`
  display: flex;
  flex: 1;
  align-items: center;
  justify-content: center;
  background: ${(p) => (p.$on ? "#2c2c2c" : "#5c5c5c")};
`;
const CheckLabel = styled.label`
  display: inline-flex;
  align-items: center;
  gap: 5px;
  margin-right: 6px;
  white-space: nowrap;
`;
const Check = styled.input`
  appearance: none;
  position: relative;
  width: 12px;
  height: 12px;
  border: 1px solid ${c.line};
  background: #5a5a5a;
  &:checked::after {
    content: "";
    position: absolute;
    left: 3px;
    top: -2px;
    width: 5px;
    height: 10px;
    border: solid #e0e0e0;
    border-width: 0 2px 2px 0;
    transform: rotate(38deg);
  }
`;
const Inline = styled.div`
  display: flex;
  align-items: center;
`;
const Info = styled.dl`
  display: grid;
  grid-template-columns: 27px 61px 105px 1fr;
  grid-auto-rows: 24px;
  align-items: center;
  margin: 1px 0 2px;
  dt, dd { margin: 0; white-space: nowrap; }
  dd { font: 12px/16px ${num}; }
`;
const InfoMark = styled.dt`
  grid-row: span 2;
`;
const TraceFoot = styled.div`
  display: flex;
  align-items: center;
  justify-content: space-between;
  height: 32px;
  padding: 0 1px;
`;

const guideRows = [
  ["#262422", "#4e4947", "#726d6a", "#97908c", "#aca7a4", "#c2bebc", "#d5d3d2", "#e8e8e8"],
  ["#1f120e", "#3f241b", "#5f3729", "#7f4a37", "#987063", "#b09489", "#cab6ae", "#e4dbd6"],
  ["#2e3f23", "#5c7f46", "#8abe69", "#b8fe8c", "#c6fea4", "#d4febb", "#e2fed1", "#f1ffe8"],
  ["#131f0b", "#263f16", "#395f22", "#4c7f2d", "#70985a", "#94b182", "#b7caab", "#dbe4d5"],
  ["#27233f", "#4e467f", "#766abe", "#9d8dfe", "#b1a4fe", "#c4bbfe", "#d8d1fe", "#ebe8ff"],
];

const SliderField = ({ id, label, v, max, text, lo, hi }: { id: string; label: string; v: number; max: number; text: string; lo: string; hi: string }) => (
  <>
    <SliderLine $h={24}>
      <RowLabel htmlFor={id}>{label} :</RowLabel>
      <Range id={id} type="range" min={0} max={max} defaultValue={v} />
      <Field $w={49} defaultValue={text} aria-label={label} />
    </SliderLine>
    <Captions>
      <span>{lo}</span>
      <span>{hi}</span>
    </Captions>
  </>
);

const MenuRow = () => (
  <MenuBar>
    <Logo>Ai</Logo>
    <Menus>
      {["ファイル(F)", "編集(E)", "オブジェクト(O)", "書式(T)", "選択(S)", "効果(C)", "表示(V)", "ウィンドウ(W)", "ヘルプ(H)"].map((m) => (
        <MenuButton key={m}>{m}</MenuButton>
      ))}
    </Menus>
    <Rule $h={20} />
    <BridgeTile>Br</BridgeTile>
    <LayoutButton aria-label="ドキュメントレイアウト">
      <svg width="18" height="15" viewBox="0 0 18 15">
        <rect x=".7" y=".7" width="16.600" height="13.600" fill="#bbb" stroke="#e2e2e2" strokeWidth="1.400" />
        <path d="M10.500 1V14M10.500 7.500H17" stroke="#2c2c2c" strokeWidth="1.500" />
        <path d="M2 2H10M2 2V13" stroke="#2c2c2c" />
      </svg>
      <Tri s={8} />
    </LayoutButton>
    <WorkspaceButton>
      初期設定
      <Tri s={6} />
    </WorkspaceButton>
    <WindowButtons>
      <WindowButton $w={27} aria-label="最小化">
        <svg width="10" height="4"><rect width="10" height="4" fill="#e6e6e6" /></svg>
      </WindowButton>
      <WindowButton $w={27} aria-label="元に戻す">
        <svg width="12" height="10" viewBox="0 0 12 10">
          <path d="M4 1H11V6H4ZM1 4H7.500V9H1Z" fill="#444" stroke="#e6e6e6" strokeWidth="2" />
        </svg>
      </WindowButton>
      <WindowButton $w={46} aria-label="閉じる">
        <svg width="10" height="9" viewBox="0 0 10 9"><path d="M1 0L9 9M9 0L1 9" stroke="#e6e6e6" strokeWidth="2.500" /></svg>
      </WindowButton>
    </WindowButtons>
  </MenuBar>
);

const ControlRow = () => (
  <ControlBar>
    <SideGrip />
    <BarTitle $w={127}>トレース画像</BarTitle>
    <Rule />
    <Spaced $l={5}>
      <BarLabel htmlFor="bar-preset" $w={71}>プリセット :</BarLabel>
    </Spaced>
    <Drop id="bar-preset" value="カスタム" w={86} />
    <Spaced $l={17} $r={17}>
      <IconButton aria-label="画像トレースパネル">
        <svg width="14" height="14" viewBox="0 0 14 14">
          <path d="M.5 .5H13.500V13.500H.5ZM1 3H13" fill="#666" stroke={G} strokeWidth="1.300" />
          <path d="M3 6.500H4.500M6 6.500H11M3 9H4.500M6 9H11M3 11.500H4.500M6 11.500H11" stroke="#ddd" />
        </svg>
      </IconButton>
    </Spaced>
    <BarLabel htmlFor="bar-view" $w={35}>表示 :</BarLabel>
    <Drop id="bar-view" value="トレース結果" w={197} />
    <Spaced $l={12} $r={7}>
      <PushButton $w={78}>拡張</PushButton>
    </Spaced>
    <Rule />
    <Spaced $l={11} $r={11}>
      <svg width="14" height="14" viewBox="0 0 14 14">
        <rect x=".7" y=".7" width="12.600" height="12.600" fill="none" stroke={G} strokeDasharray="2 1.500" />
        <circle cx="7" cy="7" r="4" fill="#777" stroke="#ccc" strokeDasharray="2 1" />
      </svg>
      <Tri s={7} color="#b8b8b8" />
    </Spaced>
    <Rule />
    <Spaced $l={4} $r={9}>
      <svg width="19" height="19" viewBox="0 0 19 19">
        <path d="M3 3H16V16H3ZM9.500 3V16M3 9.500H16" fill="none" stroke={G} />
        {[0, 7, 14].map((x) => [0, 7, 14].map((y) => (
          <rect key={`${x}-${y}`} x={x + 0.5} y={y + 0.5} width="4" height="4" fill={x === 7 && y === 7 ? "#fff" : "#333"} stroke={G} />
        )))}
      </svg>
    </Spaced>
    <NumField name="X" value="364.025 n" w={16} />
    <NumField name="Y" value="514.904 n" w={16} />
    <NumField name="W" value="281.433 n" w={20} />
    <Spaced $l={3} $r={12}>
      <svg width="14" height="15" viewBox="0 0 14 15">
        <path d="M5.500 4.500H3.500A3 3 0 0 0 3.500 10.500H5.500M8.500 4.500H10.500A3 3 0 0 1 10.500 10.500H8.500" fill="none" stroke={G} strokeWidth="2" />
        <path d="M7 0V3M4 1L5 3M10 1L9 3M7 15V12M4 14L5 12M10 14L9 12" stroke={G} />
      </svg>
    </Spaced>
    <NumField name="H" value="217.932 n" w={17} />
    <Rule />
    <Spaced $l={8}>
      <svg width="13" height="13" viewBox="0 0 15 14">
        <rect x="4" y="4" width="7" height="6" fill="#555" stroke={G} />
        <path d="M0 0L4 4M15 0L11 4M0 14L4 10M15 14L11 10M0 4H3M12 4H15M0 10H3M12 10H15" stroke={G} strokeWidth="1.200" />
      </svg>
    </Spaced>
    <TabMenu aria-label="コントロールメニュー"><ListFlyout /></TabMenu>
  </ControlBar>
);

const ToolsColumn = () => (
  <ToolDock>
    <ToolHead><Chevrons /></ToolHead>
    <ToolGrip><Dots /></ToolGrip>
    {tools.map((t, i) =>
      t ? (
        <ToolButton key={t.n} $on={t.on} aria-label={t.n}>
          <svg width="18" height="18" viewBox="0 0 54 54" overflow="visible">{t.art}</svg>
          {t.more && <Corner />}
        </ToolButton>
      ) : (
        <ToolRule key={i} />
      )
    )}
    <svg width="30" height="18" viewBox="0 0 30 18">
      <path d="M1 4H8V11H1Z" fill="#e8e8e8" stroke="#111" />
      <path d="M5 8H11V14H5V11H8V8" fill="#111" stroke="#ddd" />
      <path d="M20 6H25Q28 6 28 9V12M22 3L19 6L22 9M26 11L28 14L30 11" fill="none" stroke="#777" strokeWidth="1.500" />
    </svg>
    <FillStroke>
      <StrokeChip aria-label="線">
        <svg width="20" height="20" viewBox="0 0 20 20">
          <rect x=".5" y=".5" width="19" height="19" fill="#fff" stroke="#111" />
          <rect x="6" y="6" width="8" height="8" fill="#555" stroke="#111" />
          <path d="M1.500 18.500L18.500 1.500" stroke="#e11" strokeWidth="2" />
        </svg>
      </StrokeChip>
      <FillChip aria-label="塗り">?</FillChip>
    </FillStroke>
    <svg width="28" height="20" viewBox="0 0 28 20">
      <rect x=".5" y="5.500" width="27" height="9" fill="#fff" stroke="#111" />
      <rect x="9" y="6" width="9" height="8" fill="url(#ramp)" />
      <path d="M9.500 6V14M18.500 6V14" stroke="#111" />
      <path d="M19.500 13.500L27 6.500" stroke="#e11" strokeWidth="2" />
    </svg>
    <ToolButton aria-label="描画方法">
      <svg width="12" height="12" viewBox="0 0 12 12">
        <circle cx="4.500" cy="4.500" r="4" fill="#666" stroke={G} />
        <rect x="5" y="5" width="6" height="6" fill={G} />
      </svg>
    </ToolButton>
    <ToolButton aria-label="スクリーンモード">
      <svg width="18" height="14" viewBox="0 0 18 14">
        <rect x=".7" y="4.700" width="11" height="8.500" fill="#555" stroke={G} strokeWidth="1.300" />
        <rect x="5.700" y=".7" width="11.500" height="9" fill="#777" stroke="#ccc" strokeWidth="1.300" />
      </svg>
    </ToolButton>
  </ToolDock>
);

const DocumentArea = () => (
  <Center>
    <DocTabs>
      {[
        "Fallingwater2ndFloor.jpg* @ 100% (RGB/プレビュー)",
        "ル・トロネ平面図-01.ai* : 1 @ 150% (RGB/プレビュー)",
        "ル・トロネ平面図-01.ai* : 2 @ 100% (RGB/プレビュー)",
        "ル・トロネ平面図-00.png* @ 100% (RGB/プレビュー)",
      ].map((t, i) => (
        <DocTab key={t} $on={i === 3}>
          {t}
          <Cross />
        </DocTab>
      ))}
    </DocTabs>
    <CanvasRow>
      <Canvas><Plan /></Canvas>
      <VScroll>
        <Tri d="up" s={9} />
        <Thumb />
        <Tri s={9} />
      </VScroll>
    </CanvasRow>
    <Status>
      <StatusBox>
        <StatusField $w={42} defaultValue="100%" aria-label="ズーム" />
        <StatusDrop aria-label="ズーム一覧"><Tri /></StatusDrop>
      </StatusBox>
      <PageNav>
        <svg width="9" height="8" viewBox="0 0 9 8"><path d="M0 0H2V8H0ZM8 0V8L3 4Z" fill="#707070" /></svg>
        <Tri d="left" s={8} color="#707070" />
      </PageNav>
      <StatusBox>
        <StatusField $w={42} defaultValue="1" aria-label="アートボード番号" />
        <StatusDrop aria-label="アートボード一覧"><Tri /></StatusDrop>
      </StatusBox>
      <PageNav>
        <Tri d="right" s={8} color="#707070" />
        <svg width="9" height="8" viewBox="0 0 9 8"><path d="M7 0H9V8H7ZM1 0V8L6 4Z" fill="#707070" /></svg>
      </PageNav>
      <StatusText>選択</StatusText>
      <StatusMore aria-label="表示項目"><Tri d="right" s={9} /></StatusMore>
      <HScroll>
        <Tri d="left" s={9} />
        <Thumb />
        <Tri d="right" s={9} />
      </HScroll>
    </Status>
  </Center>
);

const DockColumn = () => (
  <RightDock>
    <DockHead><Chevrons /></DockHead>
    <Panel $h={358}>
      <TabRow>
        <PanelTab $w={56} $on>スウォッチ</PanelTab>
        <PanelTab $w={39}>ブラシ</PanelTab>
        <PanelTab $w={53}>シンボル</PanelTab>
        <TabMenu aria-label="スウォッチメニュー"><FlyoutIcon /></TabMenu>
      </TabRow>
      <Well>
        <WellScroll>
          <Tri d="up" s={7} color="#8a8a8a" />
          <Tri s={7} color="#8a8a8a" />
        </WellScroll>
      </Well>
      <PanelFoot>
        <IconButton aria-label="ライブラリ">
          <svg width="18" height="12" viewBox="0 0 18 12">
            <path d="M1 1V11M4.500 0V11M7 1L11 11" stroke={G} strokeWidth="2" />
            <path d="M13 9H18L15.500 12Z" fill={G} />
          </svg>
        </IconButton>
        <Push>
          <GridIcon />
          <IconButton $w={14} $dim aria-label="オプション">
            <svg width="10" height="10" viewBox="0 0 10 10"><path d="M.5 .5H9.500V9.500H.5ZM2 3H8M2 5H8M2 7H8" fill="none" stroke={G} /></svg>
          </IconButton>
          <IconButton $w={16} aria-label="グループ"><FolderIcon /></IconButton>
          <IconButton $w={16} $dim aria-label="新規"><NewPage /></IconButton>
          <IconButton $w={14} $dim aria-label="削除"><Trash /></IconButton>
          <Grip />
        </Push>
      </PanelFoot>
    </Panel>
    <Panel $h={281}>
      <TabRow>
        <PanelTab $w={67} $on>アピアランス</PanelTab>
        <PanelTab $w={96}>グラフィックスタイル</PanelTab>
        <TabMenu aria-label="アピアランスメニュー"><FlyoutIcon /></TabMenu>
      </TabRow>
      <Well>
        <AttrRow>
          <AttrLead><WhiteChip /></AttrLead>
          <strong>トレース画像</strong>
        </AttrRow>
        <AttrRow>
          <AttrLead />
          内容
        </AttrRow>
        <AttrRow>
          <AttrLead $line><Eye color="#6c6c6c" /></AttrLead>
          <AttrLink href="#opacity">不透明度 :</AttrLink>
          初期設定
        </AttrRow>
      </Well>
      <PanelFoot>
        <Spaced $l={3}>
          <svg width="72" height="14" viewBox="0 0 72 14">
            <rect x="1" y="3" width="8" height="8" fill="none" stroke={G} strokeWidth="2" />
            <rect x="26.500" y="2.500" width="9" height="9" fill="#333" stroke={G} />
            <rect x="28.500" y="4.500" width="5" height="5" fill={G} />
            <path d="M56 2Q53.500 0 53 4L51.500 11Q51 14 48.500 13M50 5.500H55.500M55.500 5.500Q58 5 58.500 8Q59 11.500 61.500 10.500M62 5.500Q60 5 58.500 8Q57 11.500 55 10.500" fill="none" stroke="#ccc" strokeWidth="1.400" />
            <path d="M62 9H67L64.500 11.500Z" fill={G} />
          </svg>
        </Spaced>
        <Push>
          <IconButton $w={16} $dim aria-label="消去">
            <svg width="11" height="11" viewBox="0 0 11 11"><circle cx="5.500" cy="5.500" r="4.500" fill="none" stroke={G} strokeWidth="1.600" /><path d="M2.500 2.500L8.500 8.500" stroke={G} strokeWidth="1.600" /></svg>
          </IconButton>
          <IconButton $w={16} $dim aria-label="複製"><NewPage /></IconButton>
          <IconButton $w={14} $dim aria-label="削除"><Trash /></IconButton>
          <Grip />
        </Push>
      </PanelFoot>
    </Panel>
    <Panel>
      <TabRow>
        <PanelTab $w={52} $on>レイヤー</PanelTab>
        <PanelTab $w={69}>アートボード</PanelTab>
        <TabMenu aria-label="レイヤーメニュー"><FlyoutIcon /></TabMenu>
      </TabRow>
      <Well>
        <LayerRow>
          <LayerCell $w={21}><Eye /></LayerCell>
          <LayerCell $w={22} />
          <LayerColor />
          <Tri d="right" s={8} />
          <LayerThumb>
            <svg width="16" height="16" viewBox="0 0 16 16"><path d="M3 5H12V9H4M6 4V12M9 3V11M3 13L8 10M11 7H13" fill="none" stroke="#999" strokeWidth="1.500" /></svg>
          </LayerThumb>
          <LayerName>レイヤー 1</LayerName>
          <LayerEnd $w={35}><Target /><SelSquare /></LayerEnd>
        </LayerRow>
      </Well>
      <LayerFoot>
        1 レイヤー
        <Push>
          <IconButton $w={14} aria-label="検索">
            <svg width="12" height="12" viewBox="0 0 12 12"><circle cx="7.500" cy="4.500" r="3.500" fill="none" stroke={G} strokeWidth="1.500" /><path d="M5 7L1 11.500" stroke={G} strokeWidth="2" /></svg>
          </IconButton>
          <IconButton $w={16} $dim aria-label="マスク">
            <svg width="11" height="11" viewBox="0 0 11 11"><rect x=".5" y=".5" width="10" height="10" fill="none" stroke={G} /><circle cx="6" cy="6" r="3.500" fill={G} /></svg>
          </IconButton>
          <IconButton $w={16} aria-label="サブレイヤー">
            <svg width="14" height="11" viewBox="0 0 14 11"><path d="M0 1V4H6M4 1.500L7 4L4 6.500" fill="none" stroke={G} strokeWidth="1.500" /><path d="M7 2H14V11H9V7H7Z" fill={G} /></svg>
          </IconButton>
          <IconButton $w={16} aria-label="新規レイヤー"><NewPage /></IconButton>
          <IconButton $w={14} $dim aria-label="削除"><Trash /></IconButton>
          <Grip />
        </Push>
      </LayerFoot>
    </Panel>
  </RightDock>
);

const MiniWindow = () => (
  <MiniDock>
    <FloatHead $gap={10}><Chevrons /><Cross /></FloatHead>
    <MiniGrip><Dots /></MiniGrip>
    <MiniIcons>
      <svg width="18" height="13" viewBox="0 0 18 13"><path d="M0 1H18M0 5.500H18M0 11H18" stroke={G} strokeWidth="2" /><path d="M0 2.500H18M0 7.500H18" stroke="#2c2c2c" /></svg>
      <svg width="18" height="13" viewBox="0 0 18 13"><rect x=".5" y=".5" width="17" height="12" fill="url(#ramp)" stroke="#ccc" /></svg>
      <svg width="18" height="18" viewBox="0 0 18 18">
        <circle cx="6" cy="6" r="5.500" fill={G} />
        <circle cx="9" cy="9" r="4.500" fill="#d0d0d0" />
        <circle cx="12" cy="12" r="5" fill="#888" fillOpacity=".7" stroke={G} strokeWidth="1.500" />
      </svg>
    </MiniIcons>
  </MiniDock>
);

const ColorGuide = () => (
  <GuideWindow>
    <FloatHead><Chevrons left /><Cross /></FloatHead>
    <TabRow>
      <PanelTab $w={41}>カラー</PanelTab>
      <PanelTab $w={75} $on>
        <svg width="6" height="10" viewBox="0 0 6 10"><path d="M.8 4L3 1L5.200 4M.8 6L3 9L5.200 6" fill="none" stroke="#ccc" strokeWidth="1.300" /></svg>
        カラーガイド
      </PanelTab>
      <TabMenu aria-label="カラーガイドメニュー"><FlyoutIcon /></TabMenu>
    </TabRow>
    <GuideTop>
      <BaseChip aria-label="ベースカラー" />
      <Harmony>
        <HarmonyStrip>
          {["#97908c", "#7d4a36", "#b8fe8c", "#4c7f2d", "#9d8dfe", "#3a2d7f"].map((k, i) => (
            <HarmonyColor key={k} $c={k} $on={i === 0} aria-label={k} />
          ))}
        </HarmonyStrip>
      </Harmony>
      <HarmonyDrop aria-label="ハーモニールール"><Tri s={7} /></HarmonyDrop>
    </GuideTop>
    <GuideLabels>
      <span>低明度</span>
      <Tri s={6} />
      <span>淡彩</span>
    </GuideLabels>
    <GuideGridRow>
      <GuideGrid>
        {guideRows.map((r) => ["#000", ...r].map((k, i) => <Swatch key={`${r[0]}${i}`} $c={k} aria-label={k} />))}
      </GuideGrid>
      <GuideScroll>
        <Tri d="up" s={7} />
        <GuideThumb />
        <Tri s={7} />
      </GuideScroll>
    </GuideGridRow>
    <GuideFoot>
      <svg width="19" height="12" viewBox="0 0 19 12">
        <rect x=".5" y=".5" width="13" height="9" fill="#888" stroke="#ccc" />
        <path d="M5 .5V9.500M9.500 .5V9.500M.5 5H13.500" stroke="#444" />
        <path d="M14 8H19L16.500 11Z" fill={G} />
      </svg>
      なし
      <Push>
        <svg width="13" height="13" viewBox="0 0 13 13"><circle cx="6.500" cy="6.500" r="6" fill="#8a8a8a" stroke={G} /><path d="M6.500 6.500V.5A6 6 0 0 1 12 4ZM6.500 6.500L1 9.500A6 6 0 0 0 6.500 12.500Z" fill="#ccc" /></svg>
        <svg width="17" height="12" viewBox="0 0 17 12"><path d="M3.500 4V11M0 7.500H7" stroke="#ddd" strokeWidth="2" /><path d="M5 2V1H16V10H8" fill="none" stroke={G} strokeWidth="1.500" /><path d="M9 2H12V9H9ZM13 2H16V9H13Z" fill="#999" /></svg>
        <Grip />
      </Push>
    </GuideFoot>
    <GuideGrip><Dots /></GuideGrip>
  </GuideWindow>
);

const TracePanel = () => (
  <TraceWindow>
    <FloatHead><Chevrons left /><Cross /></FloatHead>
    <TabRow>
      <PanelTab $w={75} $on>画像トレース</PanelTab>
    </TabRow>
    <TraceBody onSubmit={(e) => e.preventDefault()}>
      <PresetIcons>
        <svg width="16" height="16" viewBox="0 0 16 16">
          <path d="M3 7Q5 1 9 .5L15 4L15.500 9L12 13L8 14Q8 9 3 7Z" fill={G} />
          <path d="M8 3Q13 4 12 11" stroke="#444" fill="none" strokeWidth="1.500" />
          <circle cx="4.500" cy="11" r="3" fill="#555" stroke="#ccc" strokeWidth="1.500" />
          <path d="M4.500 6.500V8M4.500 14V15.500M0 11H1.500M7.500 11H9M1.300 7.800L2.300 8.800M6.700 13.200L7.700 14.200M1.300 14.200L2.300 13.200M6.700 8.800L7.700 7.800" stroke="#ccc" strokeWidth="1.500" />
        </svg>
        <svg width="16" height="16" viewBox="0 0 16 16"><path d="M1 4H4L5 2H8L9 4H15V14H1Z" fill={G} /><circle cx="9" cy="9" r="3.200" fill="#444" /><circle cx="9" cy="9" r="1.500" fill={G} /></svg>
        <svg width="16" height="16" viewBox="0 0 16 16"><rect x=".5" y="1.500" width="15" height="12" fill="#444" stroke={G} /><path d="M1 5.500H13M1 9.500H9M4.500 2V13M8.500 2V9.500M12.500 2V5.500" stroke={G} /></svg>
        <svg width="16" height="16" viewBox="0 0 16 16"><rect x=".5" y="1.500" width="15" height="12" fill="url(#ramp)" stroke={G} /></svg>
        <svg width="16" height="16" viewBox="0 0 16 16"><rect x=".5" y="1.500" width="15" height="12" fill="#333" stroke={G} /><rect x="8" y="2" width="7" height="11" fill="#bbb" /></svg>
        <svg width="16" height="16" viewBox="0 0 16 16"><path d="M1.500 1.500H9V4Q14 4 14.500 8.500Q14 14 8.500 13.500L5 9.500H1.500Z" fill="none" stroke={G} strokeWidth="1.400" /></svg>
      </PresetIcons>
      <HRule />
      <Row $h={31}>
        <RowLabel htmlFor="t-preset">プリセット :</RowLabel>
        <Drop id="t-preset" value="カスタム" />
        <Aside><svg width="12" height="9" viewBox="0 0 12 9"><path d="M0 .5H1.500M0 3H1.500M0 5.500H1.500M0 8H1.500M3 .5H12M3 3H12M3 5.500H12M3 8H12" stroke={G} /></svg></Aside>
      </Row>
      <Row $h={28}>
        <RowLabel htmlFor="t-view">表示 :</RowLabel>
        <Drop id="t-view" value="トレース結果" />
        <Aside><Eye /></Aside>
      </Row>
      <Row $h={28}>
        <RowLabel htmlFor="t-mode">カラーモード :</RowLabel>
        <Drop id="t-mode" value="白黒" />
      </Row>
      <Row $h={25}>
        <RowLabel htmlFor="t-palette" $off>パレット :</RowLabel>
        <Drop id="t-palette" value="限定" off />
      </Row>
      <SliderField id="t-th" label="しきい値" v={252} max={255} text="252" lo="少なく" hi="多く" />
      <Details type="button">
        <Tri s={9} color="#b8b8b8" />
        詳細
        <HRule />
      </Details>
      <SliderField id="t-path" label="パス" v={79} max={100} text="79%" lo="低" hi="高" />
      <SliderField id="t-corner" label="コーナー" v={3} max={100} text="3%" lo="少なく" hi="多く" />
      <SliderField id="t-noise" label="ノイズ" v={6} max={100} text="7 px" lo="1" hi="100" />
      <Row $h={27}>
        <RowText>方式 :</RowText>
        <Segments>
          <Segment type="button" $on aria-label="隣接">
            <svg width="17" height="14" viewBox="0 0 17 14"><path d="M0 0H14V2H0ZM0 12H14V14H0ZM0 0H6V14H0Z" fill={G} /><circle cx="8" cy="7" r="5" fill="#2c2c2c" /><circle cx="12" cy="7" r="4.500" fill="#888" stroke="#ccc" /></svg>
          </Segment>
          <Segment type="button" aria-label="重なり">
            <svg width="17" height="14" viewBox="0 0 17 14"><path d="M0 0H14V2H0ZM0 12H14V14H0ZM0 0H6V14H0Z" fill={G} /><circle cx="8" cy="7" r="5" fill="#ccc" stroke="#888" /><circle cx="12" cy="7" r="4.500" fill="#999" stroke="#ddd" /></svg>
          </Segment>
        </Segments>
      </Row>
      <Row $h={22}>
        <RowText>作成 :</RowText>
        <Inline>
          <CheckLabel><Check type="checkbox" defaultChecked />塗り</CheckLabel>
          <CheckLabel><Check type="checkbox" defaultChecked />線</CheckLabel>
        </Inline>
      </Row>
      <Row $h={25}>
        <RowLabel htmlFor="t-stroke">線 :</RowLabel>
        <Inline>
          <Stepper name="線" />
          <Field id="t-stroke" $w={57} defaultValue="4 px" />
        </Inline>
      </Row>
      <Row $h={20}>
        <RowText>オプション :</RowText>
        <CheckLabel><Check type="checkbox" defaultChecked />曲線を直線にスナップ</CheckLabel>
      </Row>
      <Row $h={23}>
        <span />
        <CheckLabel><Check type="checkbox" />ホワイトを無視</CheckLabel>
      </Row>
      <HRule />
      <Info>
        <InfoMark>
          <svg width="15" height="15" viewBox="0 0 15 15" aria-label="情報">
            <circle cx="7.500" cy="7.500" r="7" fill={G} />
            <path d="M6 6.500H8V11M6 11.500H10M7.500 3V5" fill="none" stroke="#333" strokeWidth="1.500" />
          </svg>
        </InfoMark>
        <dt>パス :</dt>
        <dd>902</dd>
        <dd>カラー : 2</dd>
        <dt>アンカー :</dt>
        <dd>10421</dd>
      </Info>
      <HRule />
      <TraceFoot>
        <CheckLabel><Check type="checkbox" defaultChecked />プレビュー</CheckLabel>
        <PushButton $w={78} $off disabled>トレース</PushButton>
      </TraceFoot>
    </TraceBody>
  </TraceWindow>
);

const HiddenSvg = styled.svg`
  position: absolute;
  width: 0;
  height: 0;
`;
const Defs = () => (
  <HiddenSvg aria-hidden>
    <defs>
      <linearGradient id="ramp">
        <stop offset="0" stopColor="#2e2e2e" />
        <stop offset="1" stopColor="#c8c8c8" />
      </linearGradient>
    </defs>
  </HiddenSvg>
);

export default function App() {
  return (
    <Shell>
      <Global />
      <Defs />
      <MenuRow />
      <ControlRow />
      <Main>
        <ToolsColumn />
        <DocumentArea />
        <DockColumn />
      </Main>
      <TracePanel />
      <MiniWindow />
      <ColorGuide />
    </Shell>
  );
}
